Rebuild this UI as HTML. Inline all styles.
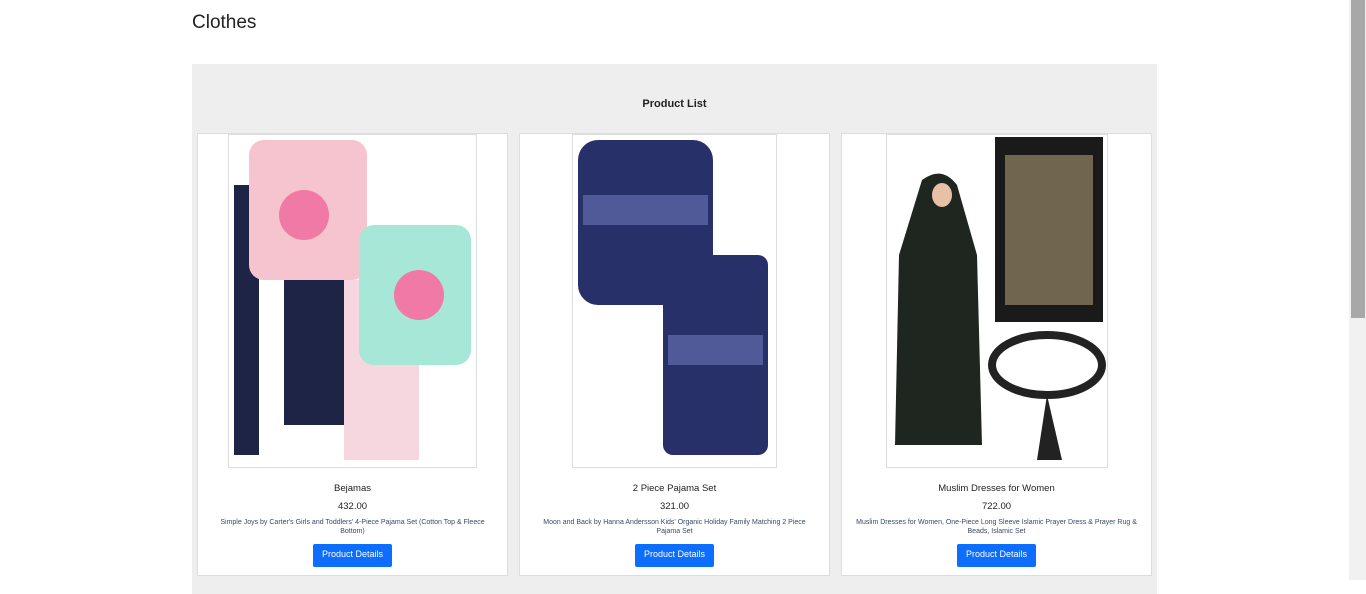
<!DOCTYPE html>
<html><head><style>
body{margin:0;background:#fff;font-family:"Liberation Sans",sans-serif;width:1366px;height:580px;overflow:hidden;position:relative}
h1{position:absolute;left:192px;top:12px;margin:0;font-weight:normal;font-size:19px;color:#222}
.panel{position:absolute;left:192px;top:64px;width:965px;height:530px;background:#eeeeee}
.pl{position:absolute;left:0;width:965px;top:34px;text-align:center;font-weight:bold;font-size:11px;color:#222}
.card{position:absolute;top:69px;width:309px;height:441px;background:#fff;border:1px solid #ddd}
.img{position:absolute;top:0;height:332px;border:1px solid #ddd;background:#fff;overflow:hidden}
.name{position:absolute;top:349px;width:100%;text-align:center;font-size:9.5px;color:#222}
.price{position:absolute;top:367px;width:100%;text-align:center;font-size:9.5px;color:#222}
.desc{position:absolute;top:384px;left:12px;right:12px;text-align:center;font-size:7px;line-height:9px;color:#3a4a6a}
.btn{position:absolute;top:410px;height:23px;width:79px;left:115px;background:#0d6efd;color:#fff;font-size:9px;line-height:21px;text-align:center;border-radius:2px}
.sb{position:absolute;left:1349px;top:0;width:17px;height:580px;background:#f1f1f1}
.th{position:absolute;left:1351px;top:0;width:14px;height:318px;background:#a8a8a8}
</style></head><body>
<h1>Clothes</h1>
<div class="panel">
<div class="pl">Product List</div>
<div class="card" style="left:5px">
 <div class="img" style="left:30px;width:247px">
 <svg width="247" height="332">
  <rect x="5" y="50" width="25" height="270" fill="#1d2445"/>
  <rect x="55" y="140" width="60" height="150" fill="#1d2445"/>
  <rect x="20" y="5" width="118" height="140" rx="15" fill="#f6c4cf"/>
  <rect x="115" y="145" width="75" height="180" fill="#f6d6df"/>
  <rect x="130" y="90" width="112" height="140" rx="15" fill="#a6e7d8"/>
  <ellipse cx="75" cy="80" rx="25" ry="25" fill="#f07aa5"/>
  <ellipse cx="190" cy="160" rx="25" ry="25" fill="#f07aa5"/>
 </svg></div>
 <div class="name">Bejamas</div><div class="price">432.00</div>
 <div class="desc">Simple Joys by Carter's Girls and Toddlers' 4-Piece Pajama Set (Cotton Top &amp; Fleece Bottom)</div>
 <div class="btn">Product Details</div>
</div>
<div class="card" style="left:327px">
 <div class="img" style="left:52px;width:203px">
 <svg width="203" height="332">
  <rect x="5" y="5" width="135" height="165" rx="20" fill="#28306a"/>
  <rect x="90" y="120" width="105" height="200" rx="10" fill="#28306a"/>
  <rect x="10" y="60" width="125" height="30" fill="#6c77b8" opacity=".6"/>
  <rect x="95" y="200" width="95" height="30" fill="#6c77b8" opacity=".6"/>
 </svg></div>
 <div class="name">2 Piece Pajama Set</div><div class="price">321.00</div>
 <div class="desc">Moon and Back by Hanna Andersson Kids' Organic Holiday Family Matching 2 Piece Pajama Set</div>
 <div class="btn">Product Details</div>
</div>
<div class="card" style="left:649px">
 <div class="img" style="left:44px;width:220px">
 <svg width="220" height="332">
  <path d="M35 45 Q55 30 70 50 L90 120 L95 310 L8 310 L12 120 Z" fill="#1f2620"/>
  <ellipse cx="55" cy="60" rx="10" ry="12" fill="#e7c0a5"/>
  <rect x="108" y="2" width="108" height="185" fill="#1a1a1a"/>
  <rect x="118" y="20" width="88" height="150" fill="#b8a57a" opacity=".55"/>
  <ellipse cx="160" cy="230" rx="55" ry="30" fill="none" stroke="#222" stroke-width="8"/>
  <path d="M160 260 L150 325 L175 325 Z" fill="#222"/>
 </svg></div>
 <div class="name">Muslim Dresses for Women</div><div class="price">722.00</div>
 <div class="desc">Muslim Dresses for Women, One-Piece Long Sleeve Islamic Prayer Dress &amp; Prayer Rug &amp; Beads, Islamic Set</div>
 <div class="btn">Product Details</div>
</div>
</div>
<div class="sb"></div><div class="th"></div>
</body></html>
